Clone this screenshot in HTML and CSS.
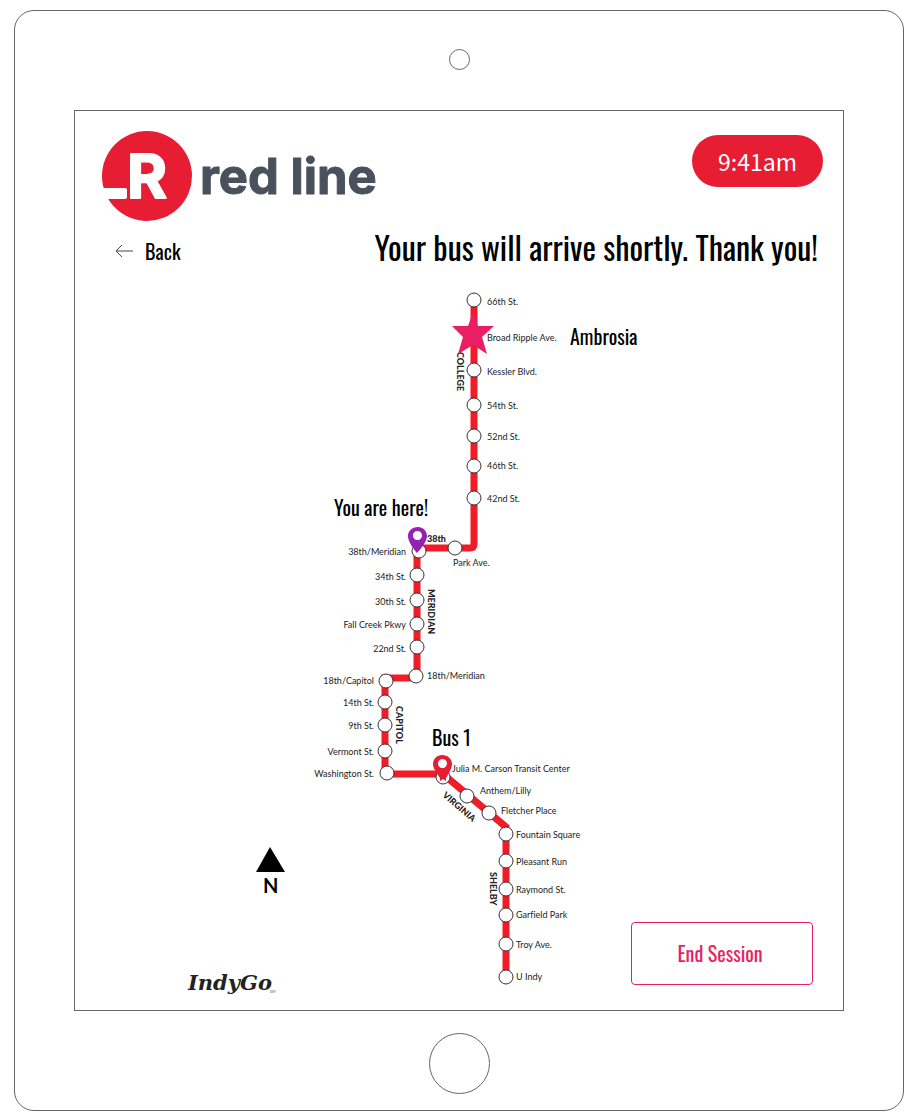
FILE: index.html
```html
<!DOCTYPE html>
<html lang="en">
<head>
<meta charset="utf-8">
<title>Red Line</title>
<link rel="stylesheet" href="styles.css">
</head>
<body>
<div class="device">
  <span class="camera"></span>
  <main class="screen">
    <header class="header">
      <svg class="logo" viewBox="0 0 280 92" role="img" aria-label="red line">
        <circle class="brand" cx="46" cy="46" r="45"/>
        <path class="paper" d="M0 58H24Q26 58 26 60V67Q26 69 24 69H0Z"/>
        <text class="logo-letter" x="26" y="68">R</text>
        <text class="logo-name" x="99" y="64">red line</text>
      </svg>
      <time class="clock">9:41am</time>
    </header>
    <div class="bar">
      <button class="back" type="button">
        <svg class="arrow" viewBox="0 0 18 14" aria-hidden="true"><path d="M18 7H1M7 1L1 7L7 13"/></svg>
        Back
      </button>
      <h1 class="title">Your bus will arrive shortly. Thank you!</h1>
    </div>
    <section class="stage">
      <svg class="map" viewBox="75 280 768 730" role="img" aria-label="Red Line route map">
        <g class="route">
          <path d="M474 300V544Q474 548 470 548H417V678H385V774H443L506 827V977"/>
        </g>
        <g class="stops">
          <circle cx="474" cy="300" r="7"/><circle cx="474" cy="370" r="7"/>
          <circle cx="474" cy="405" r="7"/><circle cx="474" cy="436" r="7"/>
          <circle cx="474" cy="466" r="7"/><circle cx="474" cy="498" r="7"/>
          <circle cx="455" cy="548" r="7"/><circle cx="419" cy="551" r="7"/>
          <circle cx="417" cy="575" r="7"/><circle cx="417" cy="600" r="7"/>
          <circle cx="417" cy="624" r="7"/><circle cx="417" cy="647" r="7"/>
          <circle cx="416" cy="676" r="7"/><circle cx="386" cy="681" r="7"/>
          <circle cx="385" cy="702" r="7"/><circle cx="385" cy="725" r="7"/>
          <circle cx="385" cy="751" r="7"/><circle cx="387" cy="773" r="7"/>
          <circle cx="443" cy="777" r="7"/><circle cx="467" cy="796" r="7"/>
          <circle cx="489" cy="813" r="7"/><circle cx="506" cy="834" r="7"/>
          <circle cx="506" cy="861" r="7"/><circle cx="506" cy="889" r="7"/>
          <circle cx="506" cy="915" r="7"/><circle cx="506" cy="944" r="7"/>
          <circle cx="506" cy="977" r="7"/>
        </g>
        <g class="names">
          <text x="487" y="305">66th St.</text>
          <text x="487" y="341">Broad Ripple Ave.</text>
          <text x="487" y="375">Kessler Blvd.</text>
          <text x="487" y="409">54th St.</text>
          <text x="487" y="440">52nd St.</text>
          <text x="487" y="469">46th St.</text>
          <text x="487" y="502">42nd St.</text>
          <text x="453" y="566">Park Ave.</text>
          <text x="427" y="679">18th/Meridian</text>
          <text x="452" y="772">Julia M. Carson Transit Center</text>
          <text x="480" y="794">Anthem/Lilly</text>
          <text x="501" y="814">Fletcher Place</text>
          <text x="516" y="838">Fountain Square</text>
          <text x="516" y="865">Pleasant Run</text>
          <text x="516" y="893">Raymond St.</text>
          <text x="516" y="918">Garfield Park</text>
          <text x="516" y="948">Troy Ave.</text>
          <text x="516" y="980">U Indy</text>
        </g>
        <g class="names names-left">
          <text x="406" y="555">38th/Meridian</text>
          <text x="406" y="580">34th St.</text>
          <text x="406" y="605">30th St.</text>
          <text x="406" y="628">Fall Creek Pkwy</text>
          <text x="406" y="652">22nd St.</text>
          <text x="374" y="684">18th/Capitol</text>
          <text x="374" y="706">14th St.</text>
          <text x="374" y="729">9th St.</text>
          <text x="374" y="755">Vermont St.</text>
          <text x="374" y="777">Washington St.</text>
        </g>
        <g class="streets">
          <text x="427" y="542">38th</text>
          <text transform="translate(457 352) rotate(90)">COLLEGE</text>
          <text transform="translate(428 589) rotate(90)">MERIDIAN</text>
          <text transform="translate(396 706) rotate(90)">CAPITOL</text>
          <text transform="translate(442 796) rotate(41)">VIRGINIA</text>
          <text transform="translate(490 872) rotate(90)">SHELBY</text>
        </g>
        <polygon class="star" points="473,312 478,326 494,326 482,337 487,354 473,345 458,354 463,337 452,326 468,326"/>
        <path class="pin-here" fill-rule="evenodd" d="M418 527C412 527 408 531 408 536C408 543 417 553 417 553C417 553 427 543 427 536C427 531 423 527 418 527ZM417.500 531A4.500 4.500 0 1 1 417.400 531Z"/>
        <path class="brand" fill-rule="evenodd" d="M442 755C437 755 433 759 433 764C433 769 438 775 440 778V781L443 779L446 781V778C448 775 452 769 452 764C452 759 448 755 442 755ZM442.500 759A4.500 4.500 0 1 1 442.400 759Z"/>
        <g class="callouts">
          <text x="570" y="345">Ambrosia</text>
          <text x="334" y="516">You are here!</text>
          <text x="432" y="746">Bus 1</text>
        </g>
        <path d="M270 847L285 872H256Z"/>
        <text class="north" x="263" y="893">N</text>
        <text class="operator" x="188" y="990">IndyGo</text>
        <text class="mark" x="270" y="993">SM</text>
      </svg>
      <button class="end" type="button">End Session</button>
    </section>
  </main>
  <span class="home"></span>
</div>
</body>
</html>
```
FILE: styles.css
```css
* { box-sizing: border-box; }

body {
  margin: 0;
  background: #fff;
  color: #000;
  font-family: Oswald, "Liberation Sans Narrow", "Roboto Condensed", Roboto, sans-serif;
}

button {
  font: inherit;
  background: none;
  cursor: pointer;
}

.device {
  display: flex;
  flex-direction: column;
  align-items: center;
  margin: 10px 10px 0 14px;
  padding: 38px 59px 16px;
  border: 1px solid #666;
  border-radius: 20px;
}

.camera,
.home {
  border: 1px solid #666;
  border-radius: 50%;
}

.camera {
  width: 21px;
  height: 21px;
  margin-bottom: 40px;
}

.home {
  width: 61px;
  height: 61px;
  margin-top: 22px;
}

.screen {
  width: 100%;
  border: 1px solid #666;
}

.header {
  display: flex;
  justify-content: space-between;
  align-items: flex-start;
  padding: 19px 20px 0 26px;
}

.logo {
  display: block;
  width: 280px;
}

.brand { fill: #e71d34; }
.paper { fill: #fff; }

.logo-letter {
  fill: #fff;
  stroke: #fff;
  stroke-width: 2px;
  stroke-linejoin: round;
  font: 700 61px Inter, sans-serif;
}

.logo-name {
  fill: #48515c;
  stroke: #48515c;
  stroke-width: 1px;
  stroke-linejoin: round;
  font: 700 49px Inter, sans-serif;
}

.clock {
  margin-top: 5px;
  padding: 0 26px;
  border-radius: 26px;
  background: #e71d34;
  color: #fff;
  font: 23px/52px "Noto Sans CJK SC", "Noto Sans", sans-serif;
}

.bar {
  display: flex;
  justify-content: space-between;
  align-items: center;
  height: 58px;
  padding: 0 25px 10px 40px;
}

.back {
  display: flex;
  align-items: center;
  gap: 12px;
  padding: 10px 0 0;
  border: 0;
  color: #000;
  font-size: 20px;
}

.arrow {
  width: 18px;
  fill: none;
  stroke: #444;
}

.title {
  margin: 0;
  font-size: 32px;
  font-weight: 400;
}

.stage { display: grid; }

.map,
.end { grid-area: 1 / 1; }

.map {
  display: block;
  width: 100%;
}

.route {
  fill: none;
  stroke: #f01c28;
  stroke-width: 7px;
}

.stops {
  fill: #fff;
  stroke: #333;
  stroke-width: 1px;
}

.names {
  fill: #222;
  font: 9px Lato, sans-serif;
  font-variant-ligatures: none;
}

.names-left { text-anchor: end; }

.streets {
  fill: #222;
  font: 900 9px Lato, sans-serif;
}

.star { fill: #e91e63; }
.pin-here { fill: #9421b0; }
.callouts { font-size: 20px; }
.north { font: 700 20px Lato, sans-serif; }

.operator {
  fill: #222;
  font: italic 700 21px "DejaVu Serif", serif;
}

.mark {
  fill: #555;
  font: italic 4px Lato, sans-serif;
}

.end {
  place-self: end;
  width: 182px;
  height: 63px;
  margin: 0 30px 25px 0;
  padding: 0 4px 2px 0;
  border: 1px solid #e91e63;
  border-radius: 4px;
  color: #e91e63;
  font-size: 20px;
}
```
